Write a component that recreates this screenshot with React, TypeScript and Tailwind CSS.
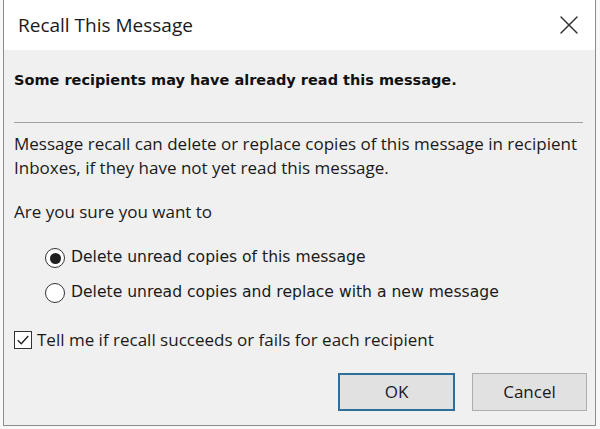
import { X } from "lucide-react";

const segoe = { fontFamily: '"Open Sans", "Noto Sans", sans-serif' };

const Radio = ({ checked, label }: { checked?: boolean; label: string }) => {
  return (
    <div className="flex items-center h-[24px] pl-[31px]">
      <span className="w-[20px] h-[20px] rounded-full border border-[#333] bg-white flex items-center justify-center">
        {checked && <span className="w-[11px] h-[11px] rounded-full bg-[#1f1f1f]" />}
      </span>
      <span className="ml-[6px] font-['DejaVu_Sans',sans-serif] text-[15.6px] text-[#1a1a1a]">{label}</span>
    </div>
  );
};

const Checkbox = ({ label }: { label: string }) => {
  return (
    <div className="flex items-center h-[24px]">
      <span className="w-[18px] h-[18px] border border-[#333] bg-white flex items-center justify-center">
        <svg width="14" height="14" viewBox="0 0 12 12" fill="none">
          <path d="M1.5 6.2 L4.5 9.2 L10.5 2.5" stroke="#222" strokeWidth="1.2" />
        </svg>
      </span>
      <span className="ml-[5px] text-[17px] text-[#1a1a1a]" style={segoe}>{label}</span>
    </div>
  );
};

const App = () => {
  return (
    <div className="w-[600px] h-[429px] bg-[#f8f8f8] pl-[3px] overflow-hidden">
      <div className="w-[593px] h-[426px] border-l border-r border-b border-[#8c8c8c] bg-[#f0f0f0] flex flex-col" style={segoe}>
        <div className="h-[50px] bg-white flex items-center justify-between pl-[14px] pr-[10px]">
          <span className="text-[19px] text-[#1a1a1a] pt-[1px]">Recall This Message</span>
          <X className="w-[32px] h-[32px] text-[#333]" strokeWidth={1.1} />
        </div>
        <div className="flex flex-col pl-[10px] pr-[8px]">
          <p className="mt-[19px] h-[22px] leading-[22px] font-['DejaVu_Sans',sans-serif] font-bold text-[14.5px] text-[#111]">
            Some recipients may have already read this message.
          </p>
          <div className="mt-[31px] h-[1px] bg-[#a0a0a0] mr-[4px]" />
          <p className="mt-[9px] text-[17px] leading-[24px] text-[#1a1a1a] whitespace-nowrap">
            Message recall can delete or replace copies of this message in recipient
            <br />
            Inboxes, if they have not yet read this message.
          </p>
          <p className="mt-[20px] text-[17px] leading-[24px] text-[#1a1a1a]">Are you sure you want to</p>
          <div className="mt-[22px]">
            <Radio checked label="Delete unread copies of this message" />
          </div>
          <div className="mt-[11px]">
            <Radio label="Delete unread copies and replace with a new message" />
          </div>
          <div className="mt-[23px]">
            <Checkbox label="Tell me if recall succeeds or fails for each recipient" />
          </div>
          <div className="mt-[21px] flex justify-end gap-[17px]">
            <button className="w-[117px] h-[38px] border-2 border-[#2e6e9b] bg-[#e1e1e1] text-[17px] text-[#1a1a1a]">OK</button>
            <button className="w-[115px] h-[38px] border border-[#adadad] bg-[#e1e1e1] text-[17px] text-[#1a1a1a]">Cancel</button>
          </div>
        </div>
      </div>
    </div>
  );
};

export default App;
